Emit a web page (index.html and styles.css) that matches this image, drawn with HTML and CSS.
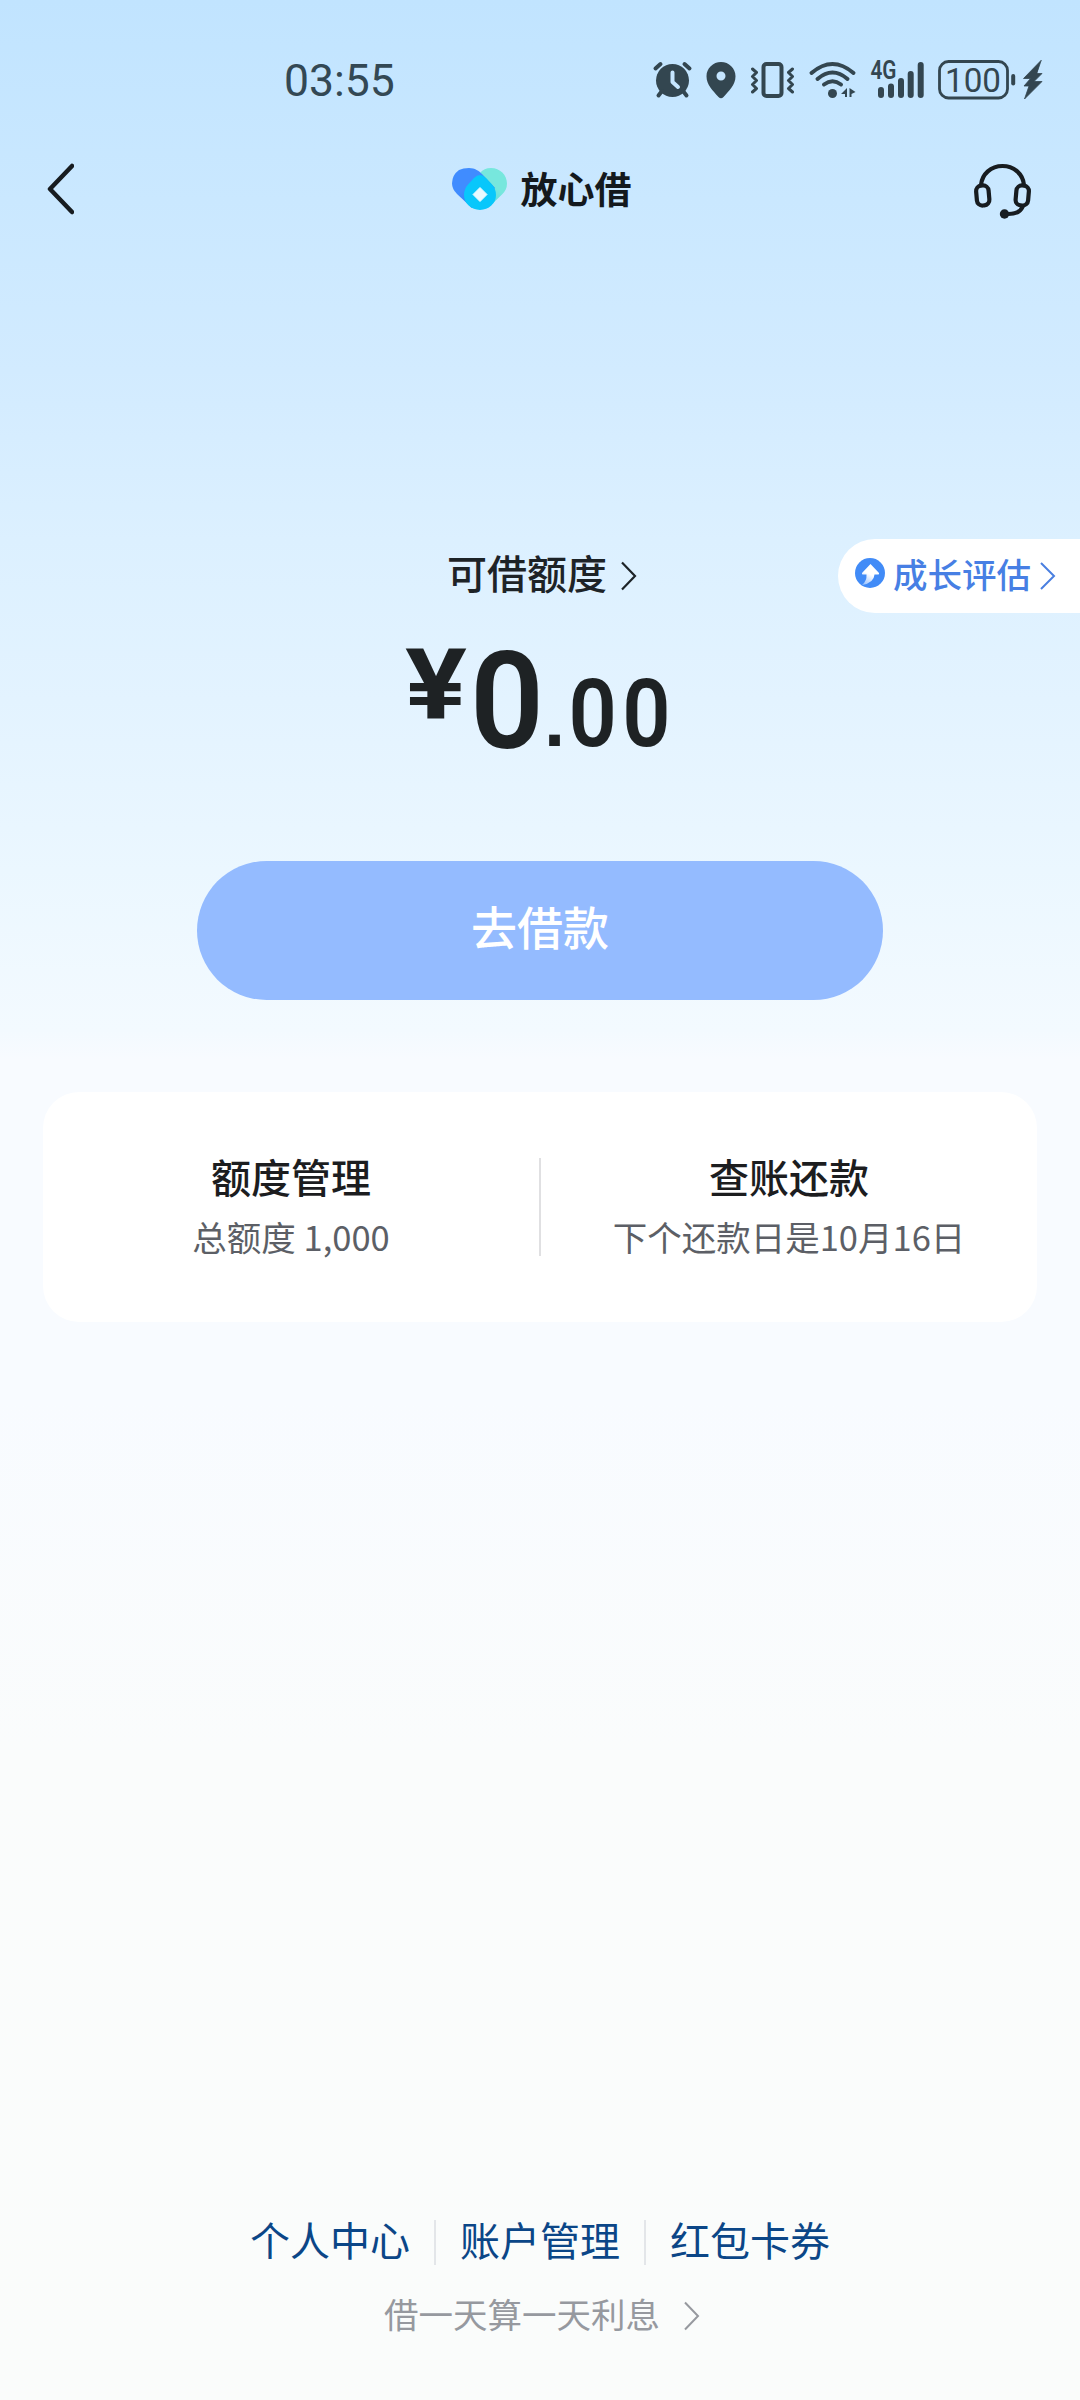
FILE: index.html
```html
<!DOCTYPE html>
<html lang="zh-CN">
<head>
<meta charset="utf-8">
<title>放心借</title>
<link rel="stylesheet" href="styles.css">
</head>
<body>
<div class="page">
  <header class="status">
    <span class="time">03:55</span>
    <svg class="status-icons" width="420" height="80" viewBox="0 0 420 80">
      <g fill="none" stroke="#334650" stroke-linecap="round" stroke-linejoin="round">
        <circle cx="32.500" cy="40.500" r="16.500" fill="#334650" stroke="none"/>
        <path d="M15.500 28.500 20.500 24M44.500 24 49.500 28.500" stroke-width="4"/>
        <path d="M22 51 18.500 55.500M43 51 46.500 55.500" stroke-width="4"/>
        <path d="M32.500 32.500V42L38 47" stroke="#c6e6ff" stroke-width="4"/>
        <path d="M81 22c-8 0-14.500 6.300-14.500 14.200C66.500 45 73 50.500 78.500 57q2.500 2.500 5 0C89 50.500 95.500 45 95.500 36.200 95.500 28.300 89 22 81 22Zm0 9.500a4.500 4.500 0 1 1 0 9 4.500 4.500 0 0 1 0-9Z" fill="#334650" fill-rule="evenodd" stroke="none"/>
        <rect x="123.500" y="24" width="18" height="32" rx="3" stroke-width="4"/>
        <path d="M112.500 29l4 3.500-4 4 4 4-4 4 4 4-4 3.500M152.500 29l-4 3.500 4 4-4 4 4 4-4 4 4 3.500" stroke-width="3"/>
        <path d="M171.500 33Q192.500 15 213.500 33M177.500 39Q192.500 26 207.500 39M184 44.500Q192.500 38 201 44.500" stroke-width="4"/>
        <circle cx="192.500" cy="53.500" r="4.500" fill="#334650" stroke="none"/>
        <path d="M201 54l6-6v9h-2v-3ZM209.500 48v9h2v-3l4-2Z" fill="#334650" stroke="none"/>
        <path d="M241 50v5M251 46.500V55M261 41v14M270.700 34v21M280.700 25v30" stroke-width="6"/>
        <rect x="299.500" y="21.500" width="68" height="36.500" rx="9" stroke-width="2.800"/>
        <path d="M373.200 36v7.500" stroke-width="4"/>
        <path d="M401 20.500 383.500 38.500h7L384 46h5L384.500 59 402 41.500h-8L402 33.500h-5Z" fill="#334650" stroke="#334650" stroke-width=".8"/>
      </g>
      <text class="net" x="230.500" y="39" textLength="26" lengthAdjust="spacingAndGlyphs">4G</text>
      <text class="battery" x="305" y="52" textLength="56" lengthAdjust="spacingAndGlyphs">100</text>
    </svg>
  </header>
  <nav class="nav">
    <svg class="back" width="28" height="52" viewBox="0 0 28 52"><path d="M26 3 4 26l22 23" fill="none" stroke="#171c20" stroke-width="4.500" stroke-linecap="round" stroke-linejoin="round"/></svg>
    <div class="brand">
      <svg width="56" height="44" viewBox="0 0 56 44">
        <defs>
          <linearGradient id="lb" x1="0" y1="0" x2="1" y2="1"><stop offset=".4" stop-color="#408cff"/><stop offset="1" stop-color="#1675f0"/></linearGradient>
          <linearGradient id="lg" x1="1" y1="0" x2="0" y2="1"><stop offset=".4" stop-color="#77e7dd"/><stop offset="1" stop-color="#38cddd"/></linearGradient>
        </defs>
        <path d="M39 1c9 0 16 7 16 15.500 0 5-2 8-5 11L38 39 17 18 28 6q4-5 11-5Z" fill="url(#lg)"/>
        <path d="M17 1c6 0 10 3 13 6l13 14L20 41 5 27Q0 22 0 16.500 0 8 7 3q4-2 10-2Z" fill="url(#lb)"/>
        <path d="M28 8q3 0 6 3l6 6.500Q44 22 44 28a16 15 0 0 1-32 0q0-6 4-10.500l6-6.500q3-3 6-3Z" fill="#08c7fb"/>
        <path d="M28 20.500l7 7-7 7-7-7Z" fill="#e9faff" stroke="#e9faff" stroke-linejoin="round"/>
      </svg>
      <span>放心借</span>
    </div>
    <svg class="service" width="60" height="58" viewBox="0 0 60 58">
      <g fill="none" stroke="#171c20" stroke-width="4.200" stroke-linecap="round" stroke-linejoin="round">
        <path d="M8 22C9 11 18 3 29.500 3S50 11 51 22"/>
        <rect x="3.500" y="22.500" width="12.500" height="20" rx="5.500" transform="rotate(-5 9.700 32.500)"/>
        <rect x="43" y="22.500" width="12.500" height="20" rx="5.500" transform="rotate(5 49.300 32.500)"/>
        <path d="M49.500 44q-3 7-14 7"/>
      </g>
      <circle cx="31.500" cy="51" r="4.700" fill="#171c20"/>
    </svg>
  </nav>
  <main>
    <section class="quota">
      <div class="quota-head">
        <span>可借额度</span>
        <svg width="18" height="30" viewBox="0 0 18 30"><path d="M2 1.500 15 15 2 28.500" fill="none" stroke="#1d2327" stroke-width="2.200"/></svg>
        <a class="growth">
          <svg width="30" height="30" viewBox="0 0 30 30">
            <defs><linearGradient id="ar" x1="0" y1="1" x2=".4" y2="0"><stop offset="0" stop-color="#8fbcff"/><stop offset=".6" stop-color="#fff"/></linearGradient></defs>
            <circle cx="15" cy="15" r="15" fill="#418bf7"/>
            <path d="M15.500 6 24 15q.5 1.500-1 1.500h-3.500Q19 25 7 27q5-4 4.500-10.500H8q-1.500 0-1-1.500Z" fill="url(#ar)"/>
          </svg>
          <span>成长评估</span>
          <svg width="18" height="28" viewBox="0 0 18 28"><path d="M2 1 15 14 2 27" fill="none" stroke="#4a7fe0" stroke-width="2"/></svg>
        </a>
      </div>
      <div class="amount">
        <svg width="340" height="190" viewBox="-34 -40 340 190">
          <text class="yen" x="1" y="75.500" textLength="62" lengthAdjust="spacingAndGlyphs">¥</text>
          <text class="int" x="66" y="105" textLength="74" lengthAdjust="spacingAndGlyphs">0</text>
          <text class="dot" x="140" y="102.500">.</text>
          <text class="dec" transform="translate(164.500 102.500) scale(.9 1)">00</text>
        </svg>
      </div>
      <button class="borrow">去借款</button>
    </section>
    <section class="card">
      <div class="cell"><strong>额度管理</strong><span>总额度 1,000</span></div>
      <i class="rule"></i>
      <div class="cell"><strong>查账还款</strong><span>下个还款日是10月16日</span></div>
    </section>
  </main>
  <footer>
    <div class="links"><a>个人中心</a><i></i><a>账户管理</a><i></i><a>红包卡券</a></div>
    <div class="interest"><span>借一天算一天利息</span>
      <svg width="18" height="30" viewBox="0 0 18 30"><path d="M2 1.500 15 15 2 28.500" fill="none" stroke="#96999f" stroke-width="2"/></svg>
    </div>
  </footer>
</div>
</body>
</html>
```
FILE: styles.css
```css
* { box-sizing: border-box; }
body { margin: 0; font-family: "Noto Sans CJK SC", sans-serif; }
svg { display: block; flex: none; }
.page {
  width: 1080px; height: 2400px; display: flex; flex-direction: column; overflow: hidden;
  background: linear-gradient(#c1e4ff 0, #cae8ff 200px, #d2ebff 370px, #dcf0ff 540px, #e3f3ff 700px, #ebf7ff 870px, #f3faff 1030px, #f8fbff 1060px, #f8fbff 1400px, #fafcfc 1750px, #fafcfb 2400px);
}
.status { height: 120px; padding: 40px 20px 0 284px; display: flex; justify-content: space-between; }
.time { font: 400 44.500px/82px Roboto, sans-serif; color: #334854; }
.net { font: 600 25px Roboto, sans-serif; fill: #334650; }
.battery { font: 400 34px Roboto, sans-serif; fill: #334650; }
.nav { height: 140px; padding: 0 47px 0 46px; display: flex; justify-content: space-between; align-items: flex-start; }
.back { margin-top: 43px; }
.service { margin-top: 43px; }
.brand { display: flex; gap: 13px; margin: 47px 0 0 36px; }
.brand span { font-size: 37px; font-weight: 700; line-height: 44px; color: #14191d; margin-top: -1px; }
.quota { display: flex; flex-direction: column; align-items: center; }
.quota-head { width: 1080px; margin-top: 279px; height: 74px; padding-left: 447px; display: flex; align-items: center; }
.quota-head > span { font-size: 40px; font-weight: 500; line-height: 66px; color: #1d2327; margin: -8px 13px 0 0; }
.growth { margin-left: auto; width: 242px; height: 74px; padding-left: 17px; display: flex; align-items: center; background: #fff; border-radius: 37px 0 0 37px; }
.growth svg { margin-top: -6px; }
.growth svg:last-child { margin: 0 0 0 8px; }
.growth span { font-size: 34.500px; font-weight: 500; color: #477fe4; line-height: 60px; margin: -7px 0 0 8px; }
.amount { margin: -10px 0 -30px; display: flex; }
.amount text { font-family: Roboto, sans-serif; font-weight: 600; fill: #1e2224; }
.amount .yen { font-size: 98px; font-weight: 700; }
.amount .int { font-size: 135px; }
.amount .dec { font-size: 94px; letter-spacing: 6px; }
.amount .dot { font: 700 76px "Liberation Sans", sans-serif; }
.borrow { width: 686px; height: 139px; margin: 98px 0 0; padding: 0 0 11px; border: 0; border-radius: 70px; background: #94bbff; color: #fff; font: 500 46px/70px "Noto Sans CJK SC", sans-serif; }
.card { width: 994px; height: 230px; margin: 92px 0 0 43px; border-radius: 36px; background: #fff; display: grid; grid-template-columns: 1fr 2px 1fr; align-items: center; }
.rule { width: 2px; height: 98px; background: #e0e0e2; }
.cell { display: flex; flex-direction: column; align-items: center; }
.cell strong { font-size: 40px; font-weight: 500; line-height: 60px; color: #1c1d1f; margin-top: -2px; }
.cell span { font-size: 34.500px; line-height: 60px; color: #5c5f66; }
footer { margin-top: 895px; display: flex; flex-direction: column; align-items: center; }
.links { display: flex; gap: 24px; }
.links a { font-size: 40px; line-height: 45px; color: #0b4687; }
.links i { width: 2px; height: 45px; margin-top: 3px; background: #e3e6e9; }
.interest { margin: 25px 0 0 5px; display: flex; align-items: center; gap: 23px; font-size: 34.500px; line-height: 46px; color: #96999f; }
.interest svg { margin-top: 5px; }
```
